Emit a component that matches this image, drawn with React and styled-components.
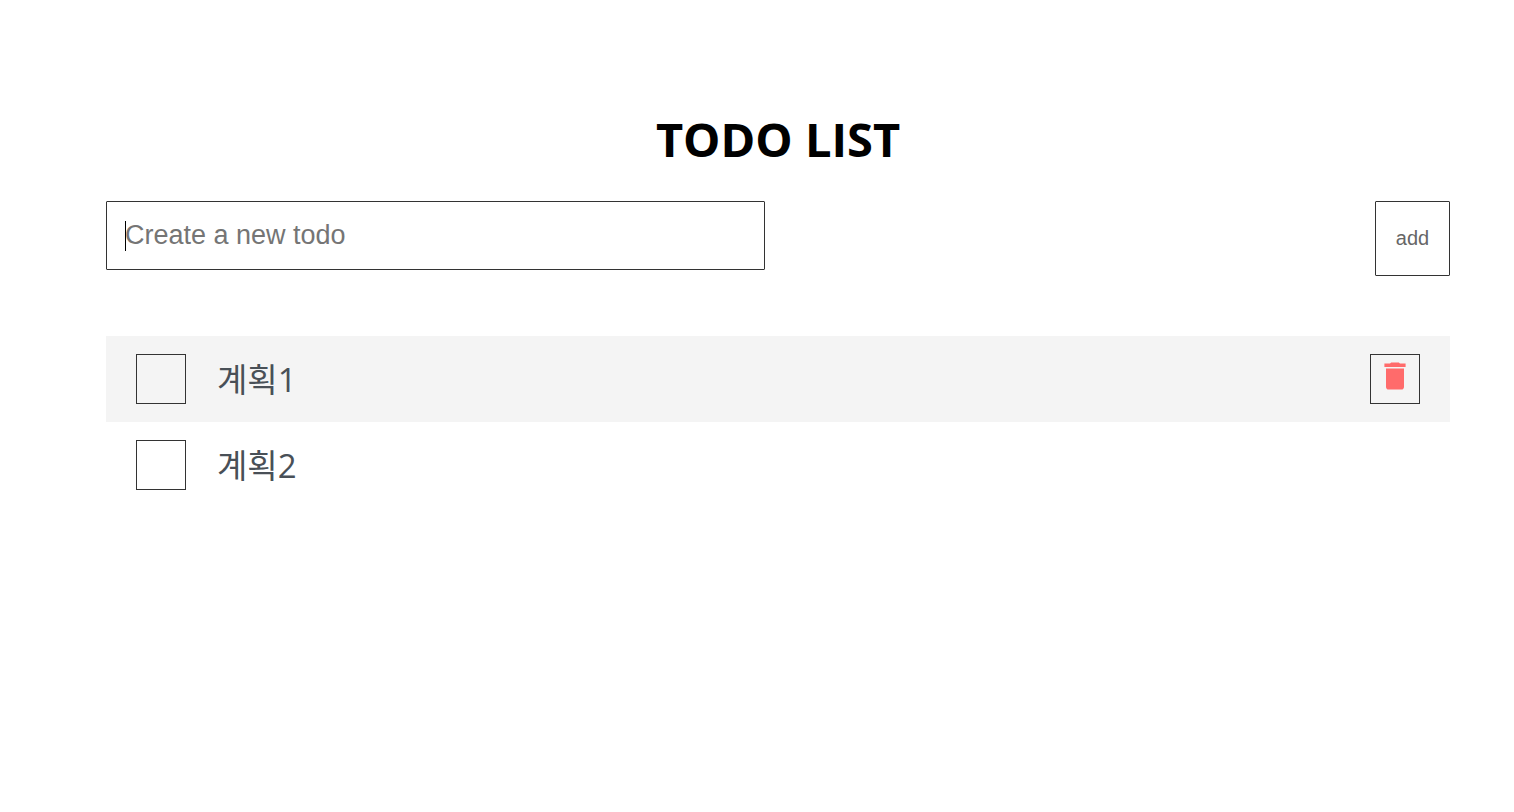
import React, { useState } from 'react';
import styled, { createGlobalStyle, keyframes } from 'styled-components';

const GlobalStyle = createGlobalStyle`
  * { box-sizing: border-box; }
  body {
    margin: 0;
    background: #fff;
    font-family: "Open Sans", "Noto Sans CJK KR", sans-serif;
  }
`;

const Page = styled.main`
  padding: 107px 64px 0 106px;
`;

const Title = styled.h1`
  margin: 0 0 30px;
  font-size: 47px;
  line-height: 64px;
  font-weight: 700;
  text-align: center;
  color: #000;
`;

const Form = styled.form`
  display: flex;
  justify-content: space-between;
  align-items: flex-start;
  margin-bottom: 60px;
`;

const Field = styled.div`
  position: relative;
  width: 49%;
`;

const TextInput = styled.input`
  display: block;
  width: 100%;
  height: 69px;
  padding: 0 18px;
  border: 1px solid #333;
  border-radius: 1px;
  outline: none;
  background: #fff;
  color: #495057;
  font-family: "Liberation Sans", Arial, sans-serif;
  font-size: 27px;
  &::placeholder { color: #757575; }
`;

const blink = keyframes`
  0%, 90% { opacity: 1; }
  91%, 100% { opacity: 0; }
`;

const Caret = styled.span`
  position: absolute;
  top: 20px;
  left: 19px;
  width: 1px;
  height: 30px;
  background: #000;
  pointer-events: none;
  animation: ${blink} 10s infinite;
`;

const AddButton = styled.button`
  width: 75px;
  height: 75px;
  padding: 0;
  border: 1px solid #333;
  border-radius: 1px;
  background: #fff;
  color: #666;
  font-family: "Liberation Sans", Arial, sans-serif;
  font-size: 20px;
  cursor: pointer;
`;

const List = styled.ul`
  margin: 0;
  padding: 0;
  list-style: none;
`;

const DeleteButton = styled.button`
  display: flex;
  justify-content: center;
  width: 50px;
  height: 50px;
  padding: 7px 0 0;
  border: 1px solid #333;
  background: transparent;
  color: #ff6b6b;
  cursor: pointer;
  visibility: ${({ $shown }) => ($shown ? 'visible' : 'hidden')};
`;

const Item = styled.li`
  display: flex;
  align-items: center;
  padding: 18px 30px;
  background: ${({ $active }) => ($active ? '#f4f4f4' : 'transparent')};
`;

const Checkbox = styled.input`
  appearance: none;
  flex: none;
  width: 50px;
  height: 50px;
  margin: 0;
  border: 1px solid #333;
  cursor: pointer;
  &:checked { background: #ced4da; }
`;

const Label = styled.label`
  flex: 1;
  padding: 2px 0 0 31px;
  font-size: 33px;
  line-height: 48px;
  color: #495057;
`;

function TrashIcon() {
  return (
    <svg width="22" height="28" viewBox="0 0 22 28" fill="currentColor" aria-hidden="true">
      <path d="M.4 1.5H6L7.2.5h7.6L16 1.5h5.6V5H.4z" />
      <path d="M2 6.5h18v18.3q0 2.8-2.8 2.8H4.8q-2.8 0-2.8-2.8z" />
    </svg>
  );
}

const todos = [
  { id: 1, text: '계획1' },
  { id: 2, text: '계획2' },
];

export default function App() {
  const [active, setActive] = useState(1);
  const [draft, setDraft] = useState('');
  return (
    <Page>
      <GlobalStyle />
      <Title>TODO LIST</Title>
      <Form onSubmit={(e) => e.preventDefault()}>
        <Field>
          <TextInput
            type="text"
            placeholder="Create a new todo"
            aria-label="Create a new todo"
            value={draft}
            onChange={(e) => setDraft(e.target.value)}
          />
          {draft === '' && <Caret />}
        </Field>
        <AddButton type="submit">add</AddButton>
      </Form>
      <List>
        {todos.map(({ id, text }) => (
          <Item key={id} $active={active === id} onMouseEnter={() => setActive(id)}>
            <Checkbox type="checkbox" id={`todo-${id}`} />
            <Label htmlFor={`todo-${id}`}>{text}</Label>
            <DeleteButton type="button" aria-label={`Delete ${text}`} $shown={active === id}>
              <TrashIcon />
            </DeleteButton>
          </Item>
        ))}
      </List>
    </Page>
  );
}
